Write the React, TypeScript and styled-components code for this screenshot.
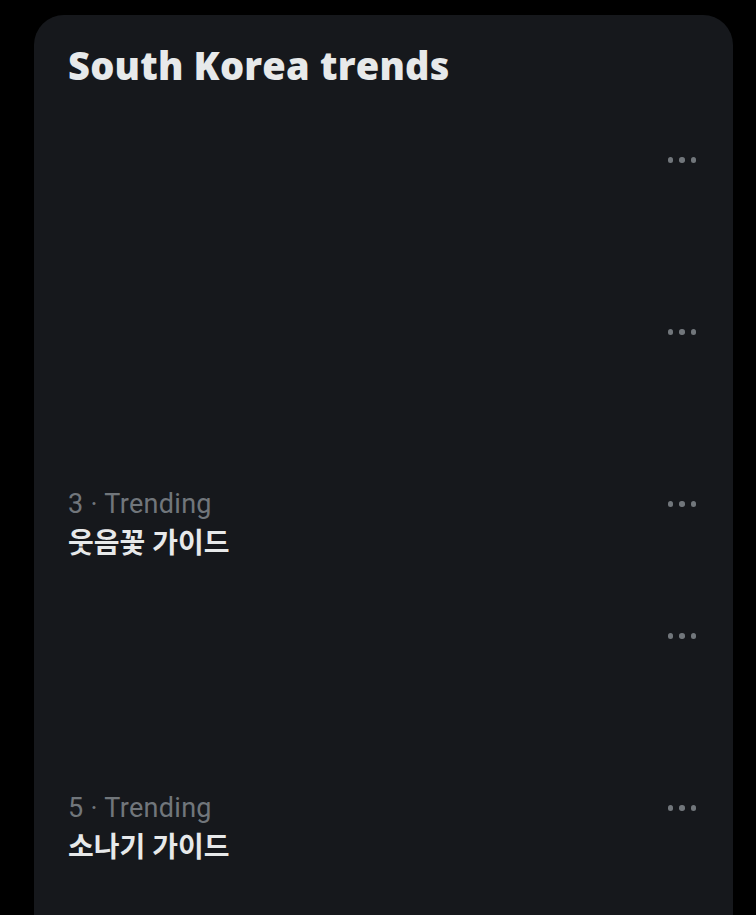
import React from "react";
import styled, { createGlobalStyle } from "styled-components";

const Global = createGlobalStyle`
  html, body { margin: 0; padding: 0; background: #000; }
  body { font-family: Roboto, "Noto Sans CJK KR", sans-serif; }
`;

const Page = styled.div`
  width: 756px;
  height: 915px;
  overflow: hidden;
  background: #000;
  padding: 15px 23px 0 34px;
  box-sizing: border-box;
`;

const Card = styled.section`
  background: #16181c;
  border-radius: 30px 30px 0 0;
  min-height: 920px;
`;

const Header = styled.h2`
  margin: 0;
  padding: 28px 34px;
  height: 100px;
  box-sizing: border-box;
  font-family: "Open Sans", "Liberation Sans", sans-serif;
  font-weight: 800;
  font-size: 38px;
  line-height: 44px;
  color: #e7e9ea;
  letter-spacing: 0.2px;
`;

const Row = styled.div<{ $tall?: boolean }>`
  position: relative;
  display: flex;
  flex-direction: column;
  padding: 26px 34px;
  height: ${(p) => (p.$tall ? 172 : 132)}px;
  box-sizing: border-box;
`;

const Meta = styled.div`
  font-family: Roboto, "Noto Sans CJK KR", sans-serif;
  font-size: 27px;
  line-height: 38px;
  height: 38px;
  letter-spacing: 0.3px;
  color: #71767b;
`;

const Topic = styled.div`
  font-family: Roboto, "Noto Sans CJK KR", sans-serif;
  font-weight: 700;
  font-size: 28px;
  line-height: 42px;
  height: 42px;
  color: #e7e9ea;
`;

const More = styled.button`
  position: absolute;
  top: 36px;
  right: 37px;
  display: flex;
  gap: 6px;
  padding: 0;
  border: 0;
  background: transparent;
  align-items: center;
  height: 18px;
`;

const Dot = styled.span`
  width: 5.5px;
  height: 5.5px;
  border-radius: 50%;
  background: #71767b;
`;

const Dots = () => (
  <More aria-label="More">
    <Dot />
    <Dot />
    <Dot />
  </More>
);

type Trend = { rank: number; name?: string; tall: boolean };

const trends: Trend[] = [
  { rank: 1, tall: true },
  { rank: 2, tall: true },
  { rank: 3, name: "웃음꽃 가이드", tall: false },
  { rank: 4, tall: true },
  { rank: 5, name: "소나기 가이드", tall: true },
];

export default function App() {
  return (
    <>
      <Global />
      <Page>
        <Card>
          <Header>South Korea trends</Header>
          {trends.map((t) => (
            <Row key={t.rank} $tall={t.tall}>
              {t.name && (
                <>
                  <Meta>{t.rank} · Trending</Meta>
                  <Topic>{t.name}</Topic>
                </>
              )}
              <Dots />
            </Row>
          ))}
        </Card>
      </Page>
    </>
  );
}
